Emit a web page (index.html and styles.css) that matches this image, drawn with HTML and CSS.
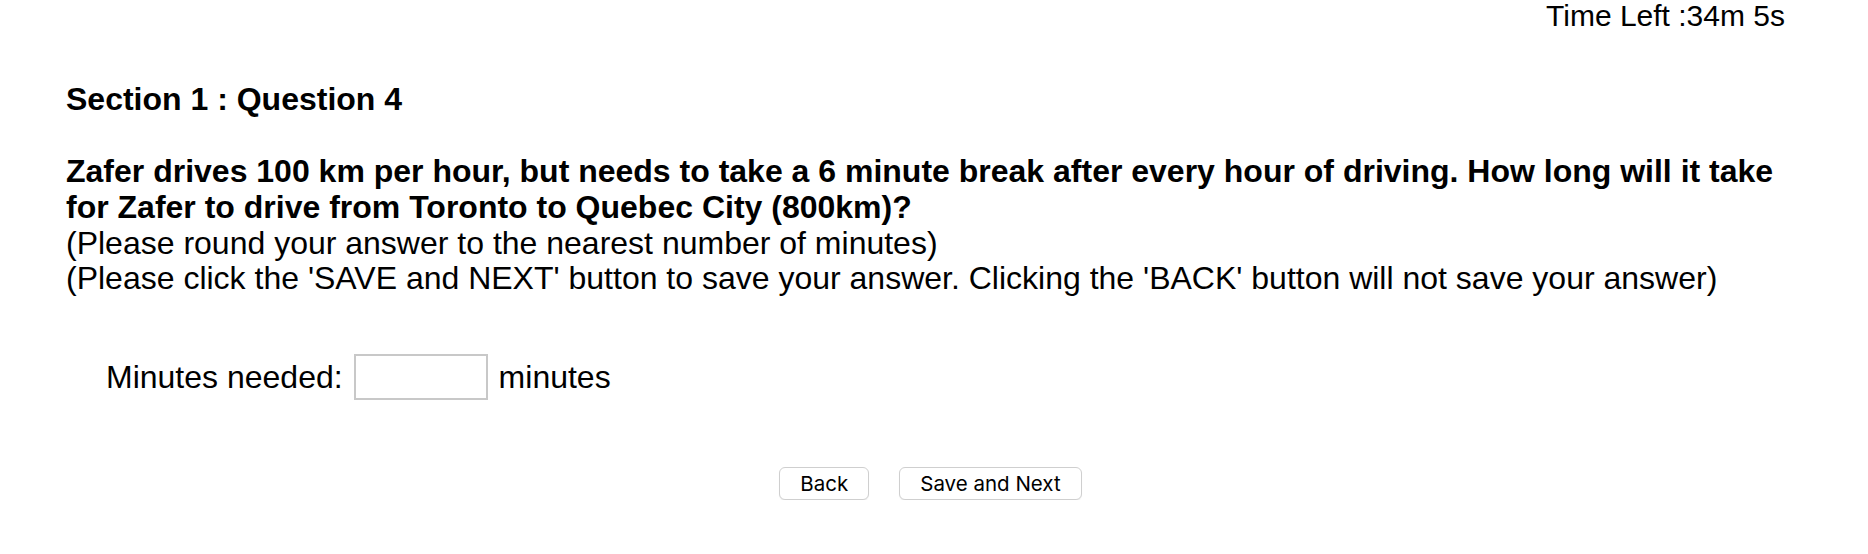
FILE: index.html
```html
<!DOCTYPE html>
<html>
<head>
<meta charset="utf-8">
<link rel="stylesheet" href="styles.css">
</head>
<body>
<div class="timer">Time Left :34m 5s</div>
<div class="content">
  <h3 class="heading">Section 1 : Question 4</h3>
  <div class="question">
    <b>Zafer drives 100 km per hour, but needs to take a 6 minute break after every hour of driving. How long will it take for Zafer to drive from Toronto to Quebec City (800km)?</b><br>
    (Please round your answer to the nearest number of minutes)<br>
    (Please click the 'SAVE and NEXT' button to save your answer. Clicking the 'BACK' button will not save your answer)
  </div>
  <div class="answer">
    <span>Minutes needed:</span>
    <input class="field" type="text">
    <span>minutes</span>
  </div>
  <div class="actions">
    <button class="btn">Back</button>
    <button class="btn">Save and Next</button>
  </div>
</div>
</body>
</html>
```
FILE: styles.css
```css
html, body {
  margin: 0;
  padding: 0;
  background: #fff;
  color: #000;
  font-family: "Liberation Sans", Arial, sans-serif;
}
.timer {
  font-size: 30px;
  line-height: 31px;
  height: 31px;
  text-align: right;
  padding-right: 83px;
}
.content {
  padding: 0 66px;
}
.heading {
  margin: 50px 0 0;
  font-size: 32px;
  line-height: 37px;
  font-weight: bold;
}
.question {
  margin-top: 36px;
  font-size: 32px;
  line-height: 35.8px;
}
.answer {
  display: flex;
  align-items: center;
  gap: 11px;
  margin-top: 57px;
  padding-left: 40px;
  font-size: 32px;
  line-height: 37px;
}
.field {
  box-sizing: border-box;
  width: 134px;
  height: 46px;
  margin: 0;
  border: 2px solid #c8c8c8;
  background: #fff;
  font-size: 28px;
  padding: 2px 4px;
}
.actions {
  display: flex;
  justify-content: center;
  gap: 30px;
  margin-top: 67px;
  padding-right: 7px;
}
.btn {
  box-sizing: border-box;
  height: 33px;
  padding: 0 20px;
  border: 1px solid #cfcfcf;
  border-radius: 6px;
  background: #fff;
  color: #000;
  font-family: Inter, "Noto Sans", sans-serif;
  font-size: 20.5px;
  line-height: 31px;
  box-shadow: 0 1px 1px rgba(0,0,0,0.06);
}
```
